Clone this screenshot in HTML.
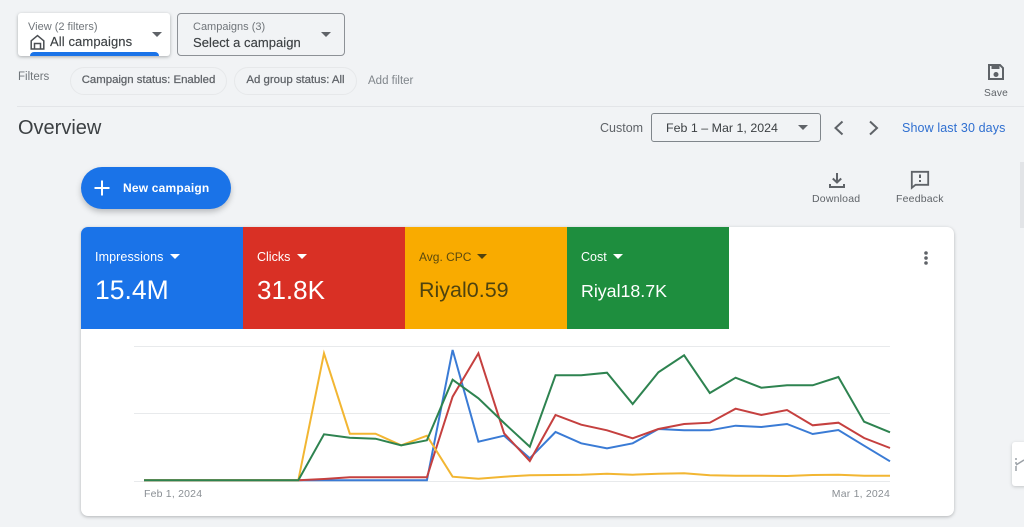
<!DOCTYPE html>
<html lang="en">
<head>
<meta charset="utf-8">
<title>Overview</title>
<style>
html{background:#f1f3f5}
html,body{margin:0;padding:0;width:1024px;height:527px;overflow:hidden}
body{background:#f1f3f5;font-family:"Liberation Sans",sans-serif;color:#3c4043;filter:blur(.3px)}
div,span{position:absolute;white-space:nowrap;box-sizing:border-box}
svg{position:absolute;display:block}
.tri{width:0;height:0;border-left:5px solid transparent;border-right:5px solid transparent;border-top:5px solid #5f6368}
.chip{height:28px;border:1px solid #e6e8ea;border-radius:14px;top:67px;font-size:11.400px;line-height:25px;color:#5f6368;text-align:center;-webkit-text-stroke:.25px #5f6368}
.lbl{font-size:12.5px;top:250px}
.val{color:#fff}
</style>
</head>
<body>
<!-- View selector -->
<div style="left:18px;top:13px;width:152px;height:43px;background:#fff;border-radius:3px;box-shadow:0 1px 3px rgba(60,64,67,.4);overflow:hidden">
  <div style="left:10px;top:7px;font-size:11px;line-height:14px;color:#70757a">View (2 filters)</div>
  <div style="left:32px;top:21px;font-size:13px;color:#3c4043;letter-spacing:.1px;-webkit-text-stroke:.15px #3c4043">All campaigns</div>
  <div style="left:12px;top:39px;width:129px;height:6px;background:#1a73e8;border-radius:4px 4px 0 0"></div>
</div>
<svg style="left:30px;top:34px" width="15" height="16" viewBox="0 0 15 16"><path d="M1.200 6.800 7.500 1.600l6.300 5.200V15H1.200Z M4.500 15V9.500h6V15" fill="none" stroke="#4a4e52" stroke-width="1.500"/></svg>
<div class="tri" style="left:152px;top:32px"></div>
<!-- Campaign selector -->
<div style="left:177px;top:13px;width:168px;height:43px;border:1px solid #8d9196;border-radius:4px">
  <div style="left:15px;top:6px;font-size:11px;line-height:14px;color:#70757a">Campaigns (3)</div>
  <div style="left:15px;top:21px;font-size:13px;color:#3c4043;letter-spacing:.05px;-webkit-text-stroke:.15px #3c4043">Select a campaign</div>
</div>
<div class="tri" style="left:321px;top:32px"></div>
<!-- Filters -->
<div style="left:18px;top:71px;font-size:11.500px;color:#70757a">Filters</div>
<div class="chip" style="left:70px;width:157px">Campaign status: Enabled</div>
<div class="chip" style="left:234px;width:123px">Ad group status: All</div>
<div style="left:368px;top:75px;font-size:11.500px;color:#80868b">Add filter</div>
<!-- Save -->
<svg style="left:986px;top:62px" width="20" height="20" viewBox="0 0 20 20"><path d="M3 3h11l3 3v11H3Z" fill="none" stroke="#5f6368" stroke-width="2"/><rect x="5.500" y="3" width="8" height="4" fill="#5f6368"/><circle cx="10" cy="12.500" r="2.500" fill="#5f6368"/></svg>
<div style="left:984px;top:88px;font-size:10.200px;color:#5f6368;letter-spacing:.2px">Save</div>
<div style="left:17px;top:106px;width:1007px;height:1px;background:#e3e5e8"></div>
<!-- Overview -->
<div style="left:18px;top:117px;font-size:20px;color:#3c4043">Overview</div>
<div style="left:600px;top:121px;font-size:12.500px;color:#5f6368">Custom</div>
<div style="left:651px;top:113px;width:170px;height:29px;border:1px solid #80868b;border-radius:3px"></div>
<div style="left:666px;top:121px;font-size:12.400px;letter-spacing:.02px;color:#3c4043">Feb 1 – Mar 1, 2024</div>
<div class="tri" style="left:798px;top:125px"></div>
<svg style="left:832px;top:119px" width="50" height="18" viewBox="0 0 50 18"><path d="M10.500 2.500 3.500 9l7 6.500M38 2.500 45 9l-7 6.500" fill="none" stroke="#5f6368" stroke-width="2"/></svg>
<div style="left:902px;top:121px;font-size:12.500px;color:#2f6fd0;letter-spacing:.12px">Show last 30 days</div>
<!-- New campaign -->
<div style="left:81px;top:167px;width:150px;height:42px;background:#1a73e8;border-radius:21px;box-shadow:0 3px 6px rgba(60,64,67,.3)"></div>
<svg style="left:94px;top:180px" width="16" height="16" viewBox="0 0 16 16"><path d="M8 .5v15M.5 8h15" stroke="#fff" stroke-width="2"/></svg>
<div style="left:123px;top:181px;font-size:12px;font-weight:bold;color:#fff;letter-spacing:.2px">New campaign</div>
<!-- Download / Feedback -->
<svg style="left:828px;top:171px" width="18" height="18" viewBox="0 0 18 18"><path d="M9 2v9.500M4.800 7.500 9 11.500l4.200-4M2 13v3h14v-3" fill="none" stroke="#5f6368" stroke-width="2"/></svg>
<div style="left:812px;top:193px;font-size:10.500px;color:#5f6368;letter-spacing:.2px">Download</div>
<svg style="left:910px;top:170px" width="20" height="20" viewBox="0 0 20 20"><path d="M1.800 1.800h16.400v13H5.500L1.800 17.800Z" fill="none" stroke="#5f6368" stroke-width="1.800"/><path d="M10 4.500v3.500M10 10v2" stroke="#5f6368" stroke-width="2"/></svg>
<div style="left:896px;top:193px;font-size:10.500px;color:#5f6368;letter-spacing:.2px">Feedback</div>
<!-- Scrollbar -->
<div style="left:1020px;top:162px;width:4px;height:66px;background:#e2e4e7"></div>
<!-- Card -->
<div style="left:81px;top:227px;width:873px;height:289px;background:#fff;border-radius:7px;box-shadow:0 1px 3px rgba(60,64,67,.35)"></div>
<div style="left:81px;top:227px;width:162px;height:102px;background:#1a73e8;border-radius:7px 0 0 0"></div>
<div style="left:243px;top:227px;width:162px;height:102px;background:#d93025"></div>
<div style="left:405px;top:227px;width:162px;height:102px;background:#f9ab00"></div>
<div style="left:567px;top:227px;width:162px;height:102px;background:#1e8e3e"></div>

<div class="lbl val" style="left:95px;letter-spacing:.1px">Impressions</div>
<div class="tri" style="left:170px;top:254px;border-top-color:#fff"></div>
<div class="val" style="left:95px;top:275px;font-size:26.500px">15.4M</div>

<div class="lbl val" style="left:257px">Clicks</div>
<div class="tri" style="left:297px;top:254px;border-top-color:#fff"></div>
<div class="val" style="left:257px;top:275px;font-size:26px">31.8K</div>

<div class="lbl" style="left:419px;color:#5c4a0e;font-size:12px">Avg. CPC</div>
<div class="tri" style="left:477px;top:254px;border-top-color:#4f430f"></div>
<div style="left:419px;top:278px;font-size:21.500px;color:#4f430f">Riyal0.59</div>

<div class="lbl val" style="left:581px">Cost</div>
<div class="tri" style="left:613px;top:254px;border-top-color:#fff"></div>
<div class="val" style="left:581px;top:281px;font-size:17.800px">Riyal18.7K</div>

<svg style="left:923px;top:250px" width="6" height="16" viewBox="0 0 6 16"><circle cx="3" cy="3" r="1.800" fill="#5f6368"/><circle cx="3" cy="8" r="1.800" fill="#5f6368"/><circle cx="3" cy="13" r="1.800" fill="#5f6368"/></svg>

<!-- Chart -->
<svg style="left:0;top:0" width="1024" height="527" viewBox="0 0 1024 527" fill="none" stroke-linejoin="miter">
  <path d="M134 346.500H890M134 413.500H890M134 481.500H890" stroke="#e8eaec" stroke-width="1"/>
  <polyline stroke="#3a7bd5" stroke-width="2" points="144,480.300 426.900,480.300 452.600,350 478.400,441.700 504.100,435.700 529.800,458.300 555.500,432 581.200,443.300 607,448.300 632.700,443.300 658.400,429 684.100,430.300 709.800,430.300 735.600,425.700 761.300,427 787,424 812.700,434 838.400,430 864.100,445.700 890,461.300"/>
  <polyline stroke="#c5403f" stroke-width="2" points="144,480.300 298.300,480.300 324,479 349.800,477.300 375.500,477.300 401.200,477.300 426.900,477.300 452.600,396.700 478.400,353.300 504.100,433.300 529.800,461 555.500,415 581.200,424.700 607,430.300 632.700,438.300 658.400,429 684.100,424 709.800,422.700 735.600,408.700 761.300,415 787,410 812.700,425.300 838.400,422.700 864.100,438 890,448"/>
  <polyline stroke="#f2b632" stroke-width="2" points="144,480.300 298.300,480.300 324,353.300 349.800,433.700 375.500,433.700 401.200,445.300 426.900,435.700 452.600,476.700 478.400,478.700 504.100,476.700 529.800,475.300 555.500,475 581.200,474.700 607,473.700 632.700,474.700 658.400,473.700 684.100,473.300 709.800,475.300 735.600,475.700 761.300,475.700 787,476 812.700,475 838.400,474.700 864.100,475.700 890,475.700"/>
  <polyline stroke="#2e8350" stroke-width="2" points="144,480.300 298.300,480.300 324,434.300 349.800,437.700 375.500,438.700 401.200,445.300 426.900,440.300 452.600,379.700 478.400,398.300 504.100,423 529.800,446.700 555.500,375.300 581.200,375.300 607,372.700 632.700,404 658.400,372.300 684.100,355.300 709.800,393 735.600,377.700 761.300,387.700 787,385.300 812.700,385.300 838.400,377 864.100,421.700 890,432.300"/>
</svg>
<div style="left:144px;top:488px;font-size:10.500px;color:#8a8f94;letter-spacing:.2px">Feb 1, 2024</div>
<div style="right:134px;top:488px;font-size:10.500px;color:#8a8f94;letter-spacing:.2px">Mar 1, 2024</div>

<!-- Side widget -->
<div style="left:1012px;top:442px;width:14px;height:44px;background:#fff;border-radius:3px 0 0 3px;box-shadow:0 1px 3px rgba(60,64,67,.25)"></div>
<svg style="left:1014px;top:456px" width="10" height="16" viewBox="0 0 10 16"><path d="M2 2v2M2 6v2M2 10v5M2 9 10 4" fill="none" stroke="#9aa0a6" stroke-width="1.500"/></svg>
</body>
</html>
